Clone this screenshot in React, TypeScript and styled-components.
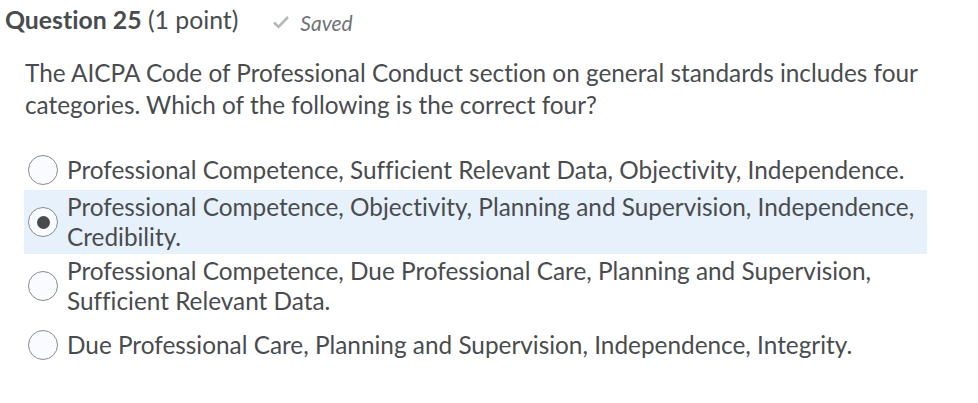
import React from "react";
import styled, { createGlobalStyle, css } from "styled-components";

const GlobalStyle = createGlobalStyle`
  body {
    margin: 0;
    background: #ffffff;
    font-family: Lato, "Open Sans", sans-serif;
    font-variant-ligatures: none;
    color: #494c4e;
  }
`;

const Page = styled.div`
  padding: 4px 0 0 5px;
  width: 978px;
  box-sizing: border-box;
`;

const Header = styled.div`
  display: flex;
  align-items: baseline;
  gap: 34px;
  height: 32px;
`;

const Title = styled.h2`
  margin: 0;
  font-size: 24.8px;
  font-weight: 400;
  line-height: 32px;
  color: #494c4e;

  & strong {
    font-weight: 700;
  }
`;

const Status = styled.span`
  display: inline-flex;
  align-items: center;
  gap: 10px;
  font-size: 21px;
  font-style: italic;
  color: #6e7376;
`;

const Prompt = styled.p`
  margin: 21px 0 0 20px;
  width: 930px;
  font-size: 24.35px;
  line-height: 32px;
`;

const Options = styled.div`
  margin: 32px 0 0 19px;
  width: 903px;
  display: flex;
  flex-direction: column;
`;

const Row = styled.label<{ selected?: boolean; spaceAbove?: number }>`
  display: flex;
  align-items: center;
  gap: 9px;
  padding: 2px 0 2px 4px;
  margin-top: ${({ spaceAbove = 0 }) => spaceAbove}px;
  ${({ selected }) =>
    selected &&
    css`
      background: #e7f1fc;
    `}
`;

const Radio = styled.span<{ checked?: boolean }>`
  flex: 0 0 auto;
  width: 30px;
  height: 30px;
  border-radius: 50%;
  border: 1px solid #868c8f;
  background: #f9fbff;
  box-sizing: border-box;
  display: flex;
  align-items: center;
  justify-content: center;

  &::after {
    content: "";
    width: 13px;
    height: 13px;
    border-radius: 50%;
    background: #494c4e;
    display: ${({ checked }) => (checked ? "block" : "none")};
  }
`;

const OptionText = styled.span`
  font-size: 24.35px;
  line-height: 30px;
  color: #494c4e;
`;

const Check = () => (
  <svg width="18" height="14" viewBox="0 0 18 14">
    <path d="M2 7.5 L6.5 12 L16 2" fill="none" stroke="#b5b9bc" strokeWidth="2.6" />
  </svg>
);

const options = [
  { text: "Professional Competence, Sufficient Relevant Data, Objectivity, Independence.", space: 0 },
  {
    text: "Professional Competence, Objectivity, Planning and Supervision, Independence, Credibility.",
    space: 3,
    selected: true,
  },
  {
    text: "Professional Competence, Due Professional Care, Planning and Supervision, Sufficient Relevant Data.",
    space: 0,
  },
  { text: "Due Professional Care, Planning and Supervision, Independence, Integrity.", space: 10 },
];

export default function App() {
  return (
    <Page>
      <GlobalStyle />
      <Header>
        <Title>
          <strong>Question 25</strong> (1 point)
        </Title>
        <Status>
          <Check />
          Saved
        </Status>
      </Header>
      <Prompt>
        The AICPA Code of Professional Conduct section on general standards includes four
        categories. Which of the following is the correct four?
      </Prompt>
      <Options>
        {options.map((o, i) => (
          <Row key={i} selected={o.selected} spaceAbove={o.space}>
            <Radio checked={o.selected} />
            <OptionText>{o.text}</OptionText>
          </Row>
        ))}
      </Options>
    </Page>
  );
}
